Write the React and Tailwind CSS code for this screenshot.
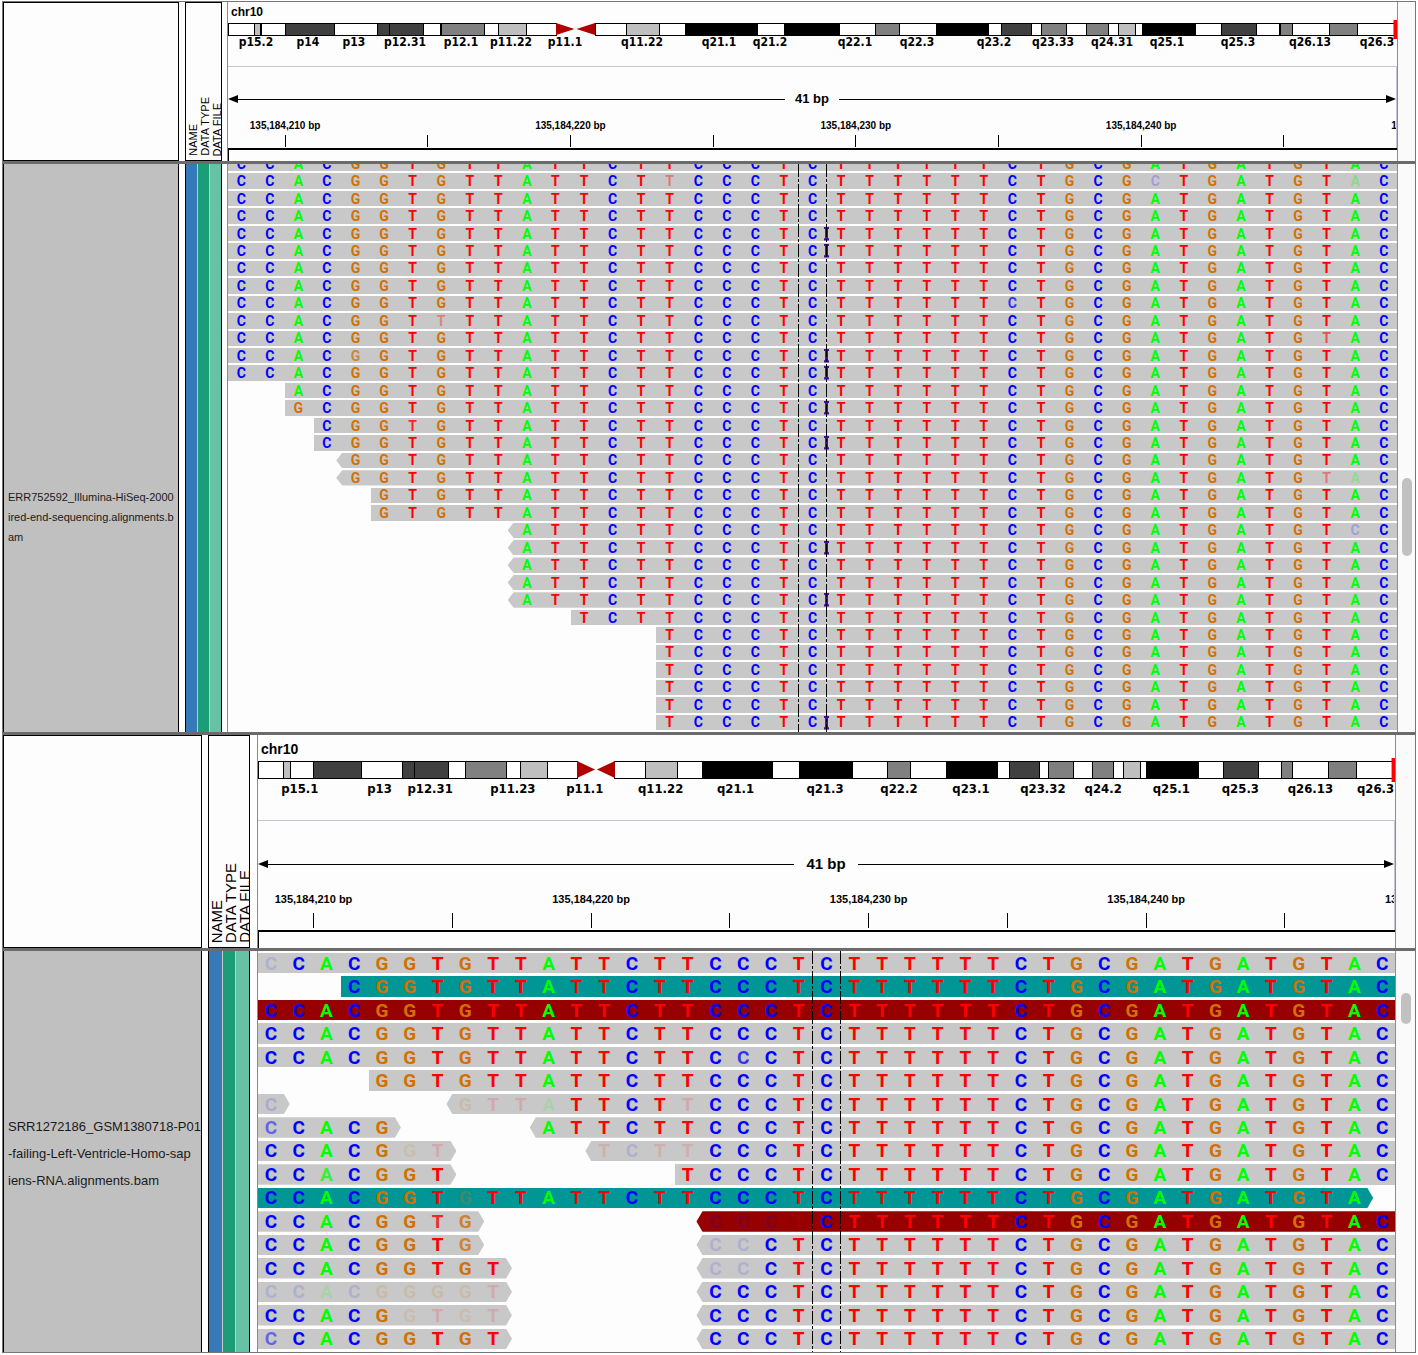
import clsx from "clsx";

const REFERENCE = "CCACGGTGTTATTCTTCCCTCTTTTTTCTGCGATGATGTAC";
const COLUMNS = REFERENCE.length;

const baseColors = {
  A: "text-[#00ff00]",
  C: "text-[#0000ff]",
  G: "text-[#d17105]",
  T: "text-[#ff0000]",
};

const readColors = {
  gray: "bg-[#c8c8c8]",
  teal: "bg-[#009696]",
  red: "bg-[#960000]",
};

const bandColors = {
  white: "fill-white",
  light: "fill-[#bfbfbf]",
  mid: "fill-[#808080]",
  dark: "fill-[#404040]",
  black: "fill-black",
};

// [end position, stain], positions are on a scale of 0 to 1169
const shortArm = [
  [26, "white"],
  [33, "light"],
  [57, "white"],
  [106, "dark"],
  [149, "white"],
  [161, "dark"],
  [196, "dark"],
  [213, "white"],
  [256, "mid"],
  [270, "white"],
  [298, "light"],
  [328, "white"],
];
const longArm = [
  [398, "white"],
  [431, "light"],
  [457, "white"],
  [529, "black"],
  [557, "white"],
  [611, "black"],
  [647, "white"],
  [671, "mid"],
  [708, "white"],
  [760, "black"],
  [773, "white"],
  [803, "dark"],
  [813, "white"],
  [838, "mid"],
  [858, "white"],
  [880, "mid"],
  [890, "white"],
  [907, "light"],
  [914, "white"],
  [967, "black"],
  [993, "white"],
  [1029, "dark"],
  [1052, "white"],
  [1064, "mid"],
  [1101, "white"],
  [1129, "mid"],
  [1169, "white"],
];
const ARM_SCALE = 1169;
const CENTROMERE = { start: 328, end: 367 };

// seg(start, end, options): faded is { index: opacity }, subs is { index: base }
const seg = (start, end = COLUMNS, options = {}) => ({ start, end, ...options });
const row = (...segments) => segments;

const hiseqReads = [
  row(seg(0)),
  row(seg(0, 41, { faded: { 15: 0.4, 32: 0.2, 39: 0.3 }, subs: { 32: "C" } })),
  row(seg(0)),
  row(seg(0)),
  row(seg(0, 41, { insertion: true })),
  row(seg(0, 41, { insertion: true })),
  row(seg(0)),
  row(seg(0)),
  row(seg(0, 41, { faded: { 27: 0.75 } })),
  row(seg(0, 41, { faded: { 7: 0.35 }, subs: { 7: "T" } })),
  row(seg(0, 41, { faded: { 38: 0.6 } })),
  row(seg(0, 41, { insertion: true, faded: { 4: 0.75 } })),
  row(seg(0, 41, { insertion: true })),
  row(seg(2)),
  row(seg(2, 41, { insertion: true, subs: { 2: "G" } })),
  row(seg(3, 41, { faded: { 6: 0.8 } })),
  row(seg(3, 41, { insertion: true })),
  row(seg(4, 41, { arrow: "left" })),
  row(seg(4, 41, { arrow: "left", faded: { 38: 0.4, 39: 0.25 } })),
  row(seg(5)),
  row(seg(5)),
  row(seg(10, 41, { arrow: "left", faded: { 39: 0.2 }, subs: { 39: "C" } })),
  row(seg(10, 41, { arrow: "left", insertion: true })),
  row(seg(10, 41, { arrow: "left" })),
  row(seg(10, 41, { arrow: "left" })),
  row(seg(10, 41, { arrow: "left", insertion: true })),
  row(seg(12)),
  row(seg(15)),
  row(seg(15)),
  row(seg(15)),
  row(seg(15)),
  row(seg(15)),
  row(seg(15, 41, { insertion: true })),
];

const ventricleReads = [
  row(seg(0, 41, { faded: { 0: 0.12 } })),
  row(seg(3, 41, { color: "teal" })),
  row(seg(0, 41, { color: "red" })),
  row(seg(0)),
  row(seg(0, 41, { faded: { 17: 0.75 } })),
  row(seg(4)),
  row(
    seg(0, 1, { arrow: "right", faded: { 0: 0.15 } }),
    seg(7, 41, { arrow: "left", faded: { 7: 0.15, 8: 0.15, 9: 0.15, 10: 0.15, 15: 0.15 } })
  ),
  row(seg(0, 5, { arrow: "right", faded: { 0: 0.5 } }), seg(10, 41, { arrow: "left" })),
  row(
    seg(0, 7, { arrow: "right", faded: { 5: 0.12, 6: 0.15 } }),
    seg(12, 41, { arrow: "left", faded: { 12: 0.12, 13: 0.12, 14: 0.12, 15: 0.12 } })
  ),
  row(seg(0, 7, { arrow: "right", faded: { 2: 0.75 } }), seg(15)),
  row(seg(0, 40, { color: "teal", arrow: "right", faded: { 7: 0.3 } })),
  row(
    seg(0, 8, { arrow: "right", faded: { 6: 0.8, 7: 0.8 } }),
    seg(16, 41, { color: "red", arrow: "left", faded: { 16: 0.15, 17: 0.15, 18: 0.15, 19: 0.1 } })
  ),
  row(
    seg(0, 8, { arrow: "right", faded: { 7: 0.75 } }),
    seg(16, 41, { arrow: "left", faded: { 16: 0.12, 17: 0.12 } })
  ),
  row(seg(0, 9, { arrow: "right" }), seg(16, 41, { arrow: "left", faded: { 16: 0.12, 17: 0.12 } })),
  row(
    seg(0, 9, {
      arrow: "right",
      subs: { 6: "G" },
      faded: { 0: 0.12, 1: 0.12, 2: 0.15, 3: 0.12, 4: 0.15, 5: 0.15, 6: 0.15, 7: 0.15, 8: 0.15 },
    }),
    seg(16, 41, { arrow: "left" })
  ),
  row(
    seg(0, 9, { arrow: "right", faded: { 5: 0.12, 6: 0.15, 7: 0.12, 8: 0.15 } }),
    seg(16, 41, { arrow: "left" })
  ),
  row(seg(0, 9, { arrow: "right", faded: { 0: 0.5 } }), seg(16, 41, { arrow: "left" })),
];

const panels = [
  {
    id: "hiseq",
    track: ["ERR752592_Illumina-HiSeq-2000", "ired-end-sequencing.alignments.b", "am"],
    reads: hiseqReads,
    thumb: [553, 137, 310],
    labels: [
      ["p15.2", 28],
      ["p14", 80],
      ["p13", 126],
      ["p12.31", 177],
      ["p12.1", 233],
      ["p11.22", 283],
      ["p11.1", 337],
      ["q11.22", 414],
      ["q21.1", 491],
      ["q21.2", 542],
      ["q22.1", 627],
      ["q22.3", 689],
      ["q23.2", 766],
      ["q23.33", 825],
      ["q24.31", 884],
      ["q25.1", 939],
      ["q25.3", 1010],
      ["q26.13", 1082],
      ["q26.3", 1149],
    ],
    ideogram: { height: 12, labelY: 22 },
    scale: { labelY: 18, tickTop: 28, tickBottom: 40 },
    cls: {
      section: "flex-[730]",
      header: "h-[159px]",
      name: "mr-1.5 w-[176px]",
      attrs: "mr-[5px] w-[37px]",
      attrHeader: "pl-0.5",
      scroll: "w-[18px]",
      attrText: "w-3 text-[11px]",
      title: "h-[18px] pt-0.5 text-[12px]",
      ideogram: "h-[46px]",
      band: "text-[12px]",
      ruler: "h-[82px]",
      span: "pt-6 text-[13px] leading-4",
      spanGap: "px-2.5",
      scale: "text-[10px]",
      trackText: "pt-[138px] text-[11px] leading-5",
      reads: "-mt-2",
      readRow: "pb-0.5",
      base: "text-[14px]",
    },
  },
  {
    id: "ventricle",
    track: ["SRR1272186_GSM1380718-P01", "-failing-Left-Ventricle-Homo-sap", "iens-RNA.alignments.bam"],
    reads: ventricleReads,
    thumb: [105, 77, 818],
    labels: [
      ["p15.1", 43],
      ["p13", 125],
      ["p12.31", 177],
      ["p11.23", 262],
      ["p11.1", 336],
      ["q11.22", 414],
      ["q21.1", 491],
      ["q21.3", 583],
      ["q22.2", 659],
      ["q23.1", 733],
      ["q23.32", 807],
      ["q24.2", 869],
      ["q25.1", 939],
      ["q25.3", 1010],
      ["q26.13", 1082],
      ["q26.3", 1149],
    ],
    ideogram: { height: 17, labelY: 30 },
    scale: { labelY: 25, tickTop: 39, tickBottom: 54 },
    cls: {
      section: "flex-[617]",
      header: "h-[213px]",
      name: "mr-1.5 w-[199px]",
      attrs: "mr-[7px] w-[42px]",
      attrHeader: "pl-0",
      scroll: "w-5",
      attrText: "w-3.5 text-[15px]",
      title: "h-[23px] pt-1 text-[14px]",
      ideogram: "h-[62px]",
      band: "text-[13px]",
      ruler: "h-[110px]",
      span: "pt-[33px] text-[15px] leading-5",
      spanGap: "px-3",
      scale: "text-[11px]",
      trackText: "pt-1 text-[13px] leading-[27px]",
      reads: "pt-0.5",
      readRow: "pb-[3px]",
      base: "text-[19px]",
    },
  },
];

const pct = (value) => `${(value / ARM_SCALE) * 100}%`;

function Arm({ start, bands, height }) {
  return bands.map(([end, stain], i) => {
    const from = i === 0 ? start : bands[i - 1][0];
    return (
      <rect
        key={end}
        x={pct(from)}
        y={3}
        width={pct(end - from)}
        height={height}
        className={clsx("stroke-black", bandColors[stain])}
        shapeRendering="crispEdges"
      />
    );
  });
}

function Ideogram({ labels, ideogram, cls }) {
  const { height, labelY } = ideogram;
  return (
    <svg className={clsx("block w-full overflow-hidden", cls.ideogram)} role="img" aria-label="chr10 ideogram">
      <Arm start={0} bands={shortArm} height={height} />
      <Arm start={CENTROMERE.end} bands={longArm} height={height} />
      <svg
        x={pct(CENTROMERE.start)}
        y={3}
        width={pct(CENTROMERE.end - CENTROMERE.start)}
        height={height}
        viewBox="0 0 40 12"
        preserveAspectRatio="none"
      >
        <path d="M0 0L19 6L0 12ZM40 0L21 6L40 12Z" className="fill-[#b00000]" />
      </svg>
      <rect x="99.7%" y={0} width={5} height={height + 7} className="fill-[#ff0000]" />
      {labels.map(([label, at]) => (
        <text
          key={label}
          x={pct(at)}
          y={labelY}
          textAnchor="middle"
          dominantBaseline="central"
          className={clsx("fill-black font-['DejaVu_Sans_Condensed','DejaVu_Sans',sans-serif] font-bold", cls.band)}
        >
          {label}
        </text>
      ))}
    </svg>
  );
}

function Span({ cls }) {
  return (
    <div className={clsx("flex items-center font-bold", cls.span)}>
      <svg className="h-2.5 w-2.5 shrink-0" viewBox="0 0 10 10">
        <path d="M0 5L10 1V9Z" />
      </svg>
      <div className="h-px flex-1 bg-black" />
      <span className={cls.spanGap}>41 bp</span>
      <div className="h-px flex-1 bg-black" />
      <svg className="h-2.5 w-2.5 shrink-0" viewBox="0 0 10 10">
        <path d="M10 5L0 1V9Z" />
      </svg>
    </div>
  );
}

function Scale({ scale, cls }) {
  const ticks = [2, 7, 12, 17, 22, 27, 32, 37, 42];
  return (
    <div className="-mr-0.5 min-h-0 flex-1">
      <svg className="block h-full w-full overflow-visible">
        {ticks.map((tick) => {
          const x = `${(tick / COLUMNS) * 100}%`;
          return (
            <g key={tick}>
              <line
                x1={x}
                x2={x}
                y1={scale.tickTop}
                y2={scale.tickBottom}
                className="stroke-black"
                shapeRendering="crispEdges"
              />
              {tick % 10 === 2 && (
                <text
                  x={x}
                  y={scale.labelY}
                  textAnchor="middle"
                  dominantBaseline="central"
                  className={clsx("fill-black font-bold", cls.scale)}
                >
                  {`135,184,${208 + tick} bp`}
                </text>
              )}
            </g>
          );
        })}
      </svg>
    </div>
  );
}

function Insertion() {
  return (
    <svg className="absolute -right-px top-0 h-full w-[5px]" viewBox="0 0 5 15" preserveAspectRatio="none">
      <path d="M0 1H5V3H4V12H5V14H0V12H1V3H0Z" fill="#4b0a9e" />
      <path d="M1 3H2V12H1Z" fill="#b00030" />
    </svg>
  );
}

function Read({ segment, cls }) {
  const { start, end, color = "gray", arrow, faded = {}, subs = {}, insertion } = segment;
  const bases = REFERENCE.slice(start, end).split("");

  return (
    <div
      className={clsx(
        "grid min-h-0 grid-cols-subgrid",
        readColors[color],
        arrow === "left" && "-ml-1.5 pl-1.5 [clip-path:polygon(6px_0,100%_0,100%_100%,6px_100%,0_50%)]",
        arrow === "right" &&
          "-mr-1 pr-1 [clip-path:polygon(0_0,calc(100%-6px)_0,100%_50%,calc(100%-6px)_100%,0_100%)]"
      )}
      style={{ gridColumn: `${start + 1} / ${end + 1}` }}
    >
      {bases.map((base, i) => {
        const index = start + i;
        const letter = subs[index] || base;
        return (
          <div key={index} className="relative flex min-h-0 items-center justify-center pr-0.5">
            <span
              className={clsx("font-[Roboto,sans-serif] leading-none font-bold", baseColors[letter], cls.base)}
              style={{ opacity: faded[index] }}
            >
              {letter}
            </span>
            {insertion && index === 20 && <Insertion />}
          </div>
        );
      })}
    </div>
  );
}

function Alignments({ reads, cls }) {
  return (
    <div className="relative min-w-0 flex-1 overflow-hidden border-l border-[#8c8c8c] bg-[#fdfdfd]">
      <div className="-mr-0.5 flex h-full flex-col">
        <div className={clsx("flex min-h-0 flex-1 flex-col", cls.reads)}>
          {reads.map((segments, i) => (
            <div
              key={i}
              className={clsx(
                "grid min-h-0 flex-1 grid-cols-[repeat(41,minmax(0,1fr))] grid-rows-[minmax(0,1fr)]",
                cls.readRow
              )}
            >
              {segments.map((segment) => (
                <Read key={segment.start} segment={segment} cls={cls} />
              ))}
            </div>
          ))}
        </div>
      </div>
      <svg className="pointer-events-none absolute inset-0 h-full w-full">
        {[20, 21].map((column) => (
          <line
            key={column}
            x1={`${(column / COLUMNS) * 100}%`}
            x2={`${(column / COLUMNS) * 100}%`}
            y1="0"
            y2="100%"
            strokeDasharray="13 2 3 2"
            className="stroke-black"
            shapeRendering="crispEdges"
          />
        ))}
      </svg>
    </div>
  );
}

function ScrollBar({ thumb, cls }) {
  const [before, size, after] = thumb;
  return (
    <div className={clsx("flex flex-col items-center border-l border-[#8c8c8c] bg-[#fafafa]", cls.scroll)}>
      <div style={{ flexGrow: before }} />
      <div className="w-2.5 rounded-full bg-[#c1c1c1]" style={{ flexGrow: size }} />
      <div style={{ flexGrow: after }} />
    </div>
  );
}

function Panel({ panel }) {
  const { cls } = panel;
  return (
    <section className={clsx("flex min-h-0 flex-col", cls.section)}>
      <header className={clsx("flex shrink-0", cls.header)}>
        <div className={clsx("shrink-0 border border-black bg-[#fdfdfd]", cls.name)} />
        <div
          className={clsx(
            "flex shrink-0 items-end overflow-hidden border border-black bg-[#fdfdfd] pb-1",
            cls.attrs,
            cls.attrHeader
          )}
        >
          {["NAME", "DATA TYPE", "DATA FILE"].map((label) => (
            <div
              key={label}
              className={clsx(
                "flex shrink-0 rotate-180 items-center justify-center leading-none whitespace-nowrap [writing-mode:vertical-rl]",
                cls.attrText
              )}
            >
              <span className="w-full">{label}</span>
            </div>
          ))}
        </div>
        <div className="flex min-w-0 flex-1 flex-col overflow-hidden border-l border-[#8c8c8c] bg-[#fdfdfd]">
          <h2 className={clsx("flex items-center pl-[3px] leading-none font-bold", cls.title)}>chr10</h2>
          <Ideogram labels={panel.labels} ideogram={panel.ideogram} cls={cls} />
          <div className={clsx("flex flex-col overflow-hidden border-t border-r border-[#c6c6d8]", cls.ruler)}>
            <Span cls={cls} />
            <Scale scale={panel.scale} cls={cls} />
          </div>
          <div className="flex-1 border-t-2 border-l border-black" />
        </div>
        <div className={clsx("border-l border-[#8c8c8c] bg-[#fafafa]", cls.scroll)} />
      </header>

      <div className="h-[3px] shrink-0 bg-[#6b6b6b]" />

      <div className="flex min-h-0 flex-1">
        <div
          className={clsx(
            "flex shrink-0 flex-col justify-center overflow-hidden border-x border-black bg-[#c0c0c0] pl-1 whitespace-nowrap text-[#1a1a1a]",
            cls.name,
            cls.trackText
          )}
        >
          {panel.track.map((line) => (
            <p key={line}>{line}</p>
          ))}
        </div>
        <div className={clsx("flex shrink-0 gap-px border-x border-black bg-[#c8c8c8]", cls.attrs)}>
          <div className="flex-1 bg-[#3579b9]" />
          <div className="flex-1 bg-[#1b9e77]" />
          <div className="flex-1 bg-[#66c2a5]" />
        </div>
        <Alignments reads={panel.reads} cls={cls} />
        <ScrollBar thumb={panel.thumb} cls={cls} />
      </div>
    </section>
  );
}

export default function App() {
  return (
    <main className="flex h-screen flex-col bg-white px-0.5 pt-px pb-0.5 font-['Liberation_Sans',Arial,sans-serif] text-black">
      <div className="flex min-h-0 flex-1 flex-col border border-[#777777]">
        <Panel panel={panels[0]} />
        <div className="h-[3px] shrink-0 bg-[#6b6b6b]" />
        <Panel panel={panels[1]} />
      </div>
    </main>
  );
}
